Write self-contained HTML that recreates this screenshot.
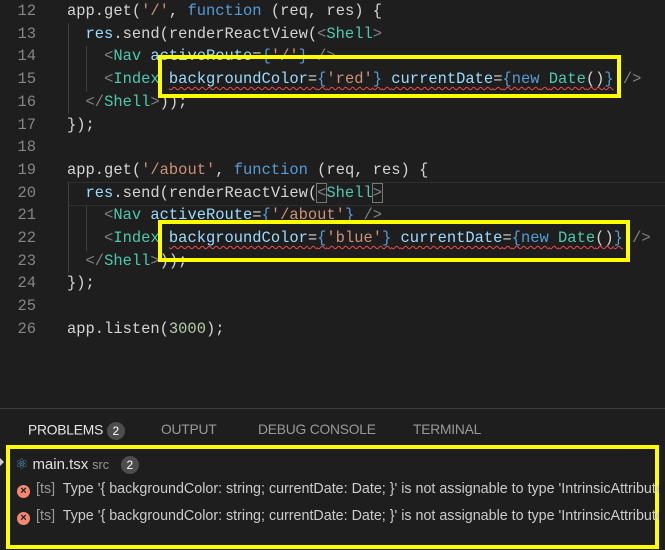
<!DOCTYPE html>
<html><head><meta charset="utf-8"><style>
body{margin:0;width:665px;height:550px;background:#1e1e1e;overflow:hidden;position:relative;font-family:"Liberation Sans",sans-serif}
.code{position:absolute;left:0;top:0;font-family:"Liberation Mono",monospace;font-size:15.45px;line-height:22.7px;white-space:pre;color:#d4d4d4}
.ln{position:absolute;left:0;width:36px;text-align:right;color:#858585}
.tx{position:absolute;left:67px}
.k{color:#569cd6}.s{color:#ce9178}.t{color:#4ec9b0}.g{color:#808080}.a{color:#9cdcfe}.f{color:#dcdcaa}
.sq{text-decoration:underline wavy #f14c4c;text-decoration-thickness:1px;text-underline-offset:3px}
.guide{position:absolute;width:1px;background:#404040}
.box{position:absolute;border:4px solid #ffff00;box-sizing:border-box}
.tab{position:absolute;top:422px;font-size:13.8px;color:#999;letter-spacing:-0.2px}
.badge{display:inline-block;background:#4d4d4d;color:#fff;border-radius:9px;font-size:12px;width:18px;height:18px;line-height:18px;text-align:center;vertical-align:middle}
.err{position:absolute;left:17px;font-size:14.3px;color:#cccccc;white-space:nowrap}
.ico{display:inline-block;width:13px;height:13px;border-radius:50%;background:#f48771;color:#1e1e1e;font-size:11px;line-height:13px;text-align:center;font-weight:bold;vertical-align:-1px;margin-right:6px}
</style></head><body>
<div class="guide" style="left:68px;top:23px;height:91px"></div>
<div class="guide" style="left:86px;top:46px;height:46px"></div>
<div class="guide" style="left:68px;top:182px;height:91px"></div>
<div class="guide" style="left:86px;top:205px;height:46px"></div>
<div style="position:absolute;left:67px;right:0;top:182px;height:22px;border-top:1px solid #2f2f2f;border-bottom:1px solid #2f2f2f"></div>
<div class="code">
<div class="ln" style="top:0">12</div><div class="tx" style="top:0">app.get(<span class="s">'/'</span>, <span class="k">function</span> (req, res) {</div>
<div class="ln" style="top:22.7px">13</div><div class="tx" style="top:22.7px">  <span class="a">res</span>.send(renderReactView(<span class="g">&lt;</span><span class="t">Shell</span><span class="g">&gt;</span></div>
<div class="ln" style="top:45.4px">14</div><div class="tx" style="top:45.4px">    <span class="g">&lt;</span><span class="t">Nav</span> <span class="a">activeRoute</span>=<span class="k">{</span><span class="s">'/'</span><span class="k">}</span> <span class="g">/&gt;</span></div>
<div class="ln" style="top:68.1px">15</div><div class="tx" style="top:68.1px">    <span class="g">&lt;</span><span class="t">Index</span> <span class="sq"><span class="a">backgroundColor</span>=<span class="k">{</span><span class="s">'red'</span><span class="k">}</span> <span class="a">currentDate</span>=<span class="k">{new</span> <span class="t">Date</span>()<span class="k">}</span></span> <span class="g">/&gt;</span></div>
<div class="ln" style="top:90.8px">16</div><div class="tx" style="top:90.8px">  <span class="g">&lt;/</span><span class="t">Shell</span><span class="g">&gt;</span>));</div>
<div class="ln" style="top:113.5px">17</div><div class="tx" style="top:113.5px">});</div>
<div class="ln" style="top:136.2px">18</div>
<div class="ln" style="top:158.9px">19</div><div class="tx" style="top:158.9px">app.get(<span class="s">'/about'</span>, <span class="k">function</span> (req, res) {</div>
<div class="ln" style="top:181.6px">20</div><div class="tx" style="top:181.6px">  <span class="a">res</span>.send(renderReactView(<span class="g" style="outline:1px solid #777">&lt;</span><span class="t">Shell</span><span class="g" style="outline:1px solid #777">&gt;</span></div>
<div class="ln" style="top:204.3px">21</div><div class="tx" style="top:204.3px">    <span class="g">&lt;</span><span class="t">Nav</span> <span class="a">activeRoute</span>=<span class="k">{</span><span class="s">'/about'</span><span class="k">}</span> <span class="g">/&gt;</span></div>
<div class="ln" style="top:227px">22</div><div class="tx" style="top:227px">    <span class="g">&lt;</span><span class="t">Index</span> <span class="sq"><span class="a">backgroundColor</span>=<span class="k">{</span><span class="s">'blue'</span><span class="k">}</span> <span class="a">currentDate</span>=<span class="k">{new</span> <span class="t">Date</span>()<span class="k">}</span></span> <span class="g">/&gt;</span></div>
<div class="ln" style="top:249.7px">23</div><div class="tx" style="top:249.7px">  <span class="g">&lt;/</span><span class="t">Shell</span><span class="g">&gt;</span>));</div>
<div class="ln" style="top:272.4px">24</div><div class="tx" style="top:272.4px">});</div>
<div class="ln" style="top:295.1px">25</div>
<div class="ln" style="top:317.8px">26</div><div class="tx" style="top:317.8px">app.listen(<span style="color:#b5cea8">3000</span>);</div>
</div>
<div class="box" style="left:158px;top:55px;width:463px;height:43px"></div>
<div class="box" style="left:158px;top:220px;width:472px;height:42px"></div>
<div style="position:absolute;left:0;right:0;top:408px;height:1px;background:#3c3c3c"></div>
<div class="tab" style="left:28px;color:#e7e7e7">PROBLEMS <span class="badge">2</span></div>
<div class="tab" style="left:161px">OUTPUT</div>
<div class="tab" style="left:258px">DEBUG CONSOLE</div>
<div class="tab" style="left:413px">TERMINAL</div>
<div class="box" style="left:6px;top:445px;width:653px;height:104px"></div>
<div style="position:absolute;left:0;top:458px;width:0;height:0;border-left:4px solid #ccc;border-top:4px solid transparent;border-bottom:4px solid transparent"></div>
<div class="err" style="top:455px;left:15px"><span style="color:#519aba;font-size:15px">⚛</span> <span style="color:#e0e0e0;font-size:15px">main.tsx</span> <span style="color:#999;font-size:12.5px">src</span> &nbsp;&nbsp;<span class="badge">2</span></div>
<div class="err" style="top:481px"><span class="ico">×</span><span style="color:#999">[ts]</span>&nbsp; Type '{ backgroundColor: string; currentDate: Date; }' is not assignable to type 'IntrinsicAttributes</div>
<div class="err" style="top:508px"><span class="ico">×</span><span style="color:#999">[ts]</span>&nbsp; Type '{ backgroundColor: string; currentDate: Date; }' is not assignable to type 'IntrinsicAttributes</div>
<div style="position:absolute;left:659px;top:445px;width:6px;height:105px;background:#1e1e1e"></div>
</body></html>
